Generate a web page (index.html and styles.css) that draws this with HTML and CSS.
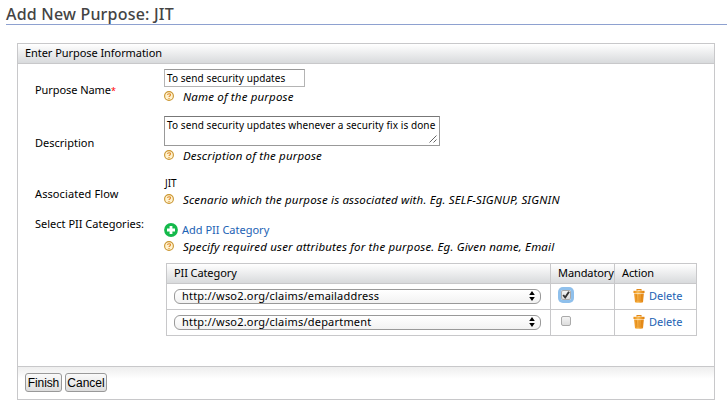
FILE: index.html
```
<!DOCTYPE html>
<html lang="en">
<head>
<meta charset="utf-8">
<title>Add New Purpose</title>
<link rel="stylesheet" href="styles.css">
</head>
<body>
<svg class="defs" width="0" height="0">
  <defs>
    <linearGradient id="gold" x1="0" y1="0" x2="1" y2="0"><stop offset="0" stop-color="#e8890c"/><stop offset=".4" stop-color="#fbbd55"/><stop offset="1" stop-color="#e07c06"/></linearGradient>
  </defs>
  <symbol id="help" viewBox="0 0 10 10">
    <circle cx="5" cy="5" r="4.4" fill="#fff3cf" stroke="#c9942f" stroke-width="1.1"/>
    <path d="M3.5 3.9C3.6 2.3 6.6 2.3 6.5 4C6.4 5 5 5 5 6.1M5 6.9V7.9" fill="none" stroke="#e08a2c" stroke-width="1.1"/>
  </symbol>
  <symbol id="trash" viewBox="0 0 12 14">
    <path d="M4 1.8V.6H8V1.8" fill="none" stroke="#e28a1a" stroke-width="1.1"/>
    <path d="M.5 1.8H11.5V4H.5Z" fill="url(#gold)"/>
    <path d="M1.2 4.4H10.8L10 13.2Q6 14.4 2 13.2Z" fill="url(#gold)"/>
    <path d="M3.6 5.4L4 12.4M6 5.4V12.6M8.4 5.4L8 12.4" stroke="#d87a0c" stroke-width=".7"/>
  </symbol>
</svg>
<h1 class="title">Add New Purpose: JIT</h1>
<section class="panel">
  <header class="panel-head">Enter Purpose Information</header>
  <div class="form">
    <div class="row row-name">
      <div class="label">Purpose Name<span class="req">*</span></div>
      <div class="field">
        <div class="input">To send security updates</div>
        <div class="hint"><svg class="help"><use href="#help"/></svg><em>Name of the purpose</em></div>
      </div>
    </div>
    <div class="row row-desc">
      <div class="label">Description</div>
      <div class="field">
        <div class="textarea">To send security updates whenever a security fix is done<svg class="grip" viewBox="0 0 8 8"><path d="M.5 7.5L7.5 .5M4.5 7.5L7.5 4.5" stroke="#555" stroke-width=".9"/></svg></div>
        <div class="hint"><svg class="help"><use href="#help"/></svg><em>Description of the purpose</em></div>
      </div>
    </div>
    <div class="row row-flow">
      <div class="label">Associated Flow</div>
      <div class="field">
        <div class="value">JIT</div>
        <div class="hint"><svg class="help"><use href="#help"/></svg><em>Scenario which the purpose is associated with. Eg. SELF-SIGNUP, SIGNIN</em></div>
      </div>
    </div>
    <div class="row row-pii">
      <div class="label">Select PII Categories:</div>
      <div class="field">
        <a class="add"><svg class="plus" viewBox="0 0 14 14"><circle cx="7" cy="7" r="6.9" fill="#14b94b"/><path d="M7 3V11M3 7H11" stroke="#fff" stroke-width="2.8"/></svg>Add PII Category</a>
        <div class="hint"><svg class="help"><use href="#help"/></svg><em>Specify required user attributes for the purpose. Eg. Given name, Email</em></div>
        <div class="table">
          <div class="cell th">PII Category</div>
          <div class="cell th">Mandatory</div>
          <div class="cell th">Action</div>
          <div class="cell"><div class="select"><span>http://wso2.org/claims/emailaddress</span><svg class="arrows" viewBox="0 0 6 10"><path d="M3 0L5.8 4H.2ZM3 10L5.8 6H.2Z"/></svg></div></div>
          <div class="cell"><span class="check focus"><svg viewBox="0 0 10 10"><path d="M2.2 5L4.2 7.5L8 1.8" fill="none" stroke="#333" stroke-width="1.9"/></svg></span></div>
          <div class="cell action"><svg class="trash"><use href="#trash"/></svg><a>Delete</a></div>
          <div class="cell"><div class="select"><span>http://wso2.org/claims/department</span><svg class="arrows" viewBox="0 0 6 10"><path d="M3 0L5.8 4H.2ZM3 10L5.8 6H.2Z"/></svg></div></div>
          <div class="cell"><span class="check"></span></div>
          <div class="cell action"><svg class="trash"><use href="#trash"/></svg><a>Delete</a></div>
        </div>
      </div>
    </div>
  </div>
  <footer class="panel-foot">
    <span class="btn finish">Finish</span>
    <span class="btn cancel">Cancel</span>
  </footer>
</section>
</body>
</html>
```

FILE: styles.css
```
* { box-sizing: border-box; }
body { margin: 0; width: 727px; height: 408px; overflow: hidden; background: #fff; color: #000; font: 11px/14px "Noto Sans", "Open Sans", sans-serif; white-space: nowrap; }
svg { display: block; flex: none; }
.defs { position: absolute; }
.title { margin: 0 0 18px 6px; height: 25px; padding: 4px 0 0; border-bottom: 1px solid #8ea1d0; color: #444; font-size: 16px; line-height: 20px; font-weight: 500; letter-spacing: .2px; }
.panel { width: 698px; height: 357px; margin-left: 17px; border: 1px solid #c8c8ca; display: flex; flex-direction: column; }
.panel-head { height: 20px; padding: 2px 0 0 7px; border-bottom: 1px solid #c8c8ca; background: linear-gradient(#fff, #d8dadc); letter-spacing: -.06px; }
.form { flex: 1; padding: 5px 0 0 17px; }
.row { display: flex; }
.row-name { height: 47px; }
.row-desc { height: 60px; }
.row-flow { height: 41px; }
.label { width: 129px; }
.row-name .label { padding-top: 14px; letter-spacing: -.07px; }
.row-desc .label { padding-top: 20px; }
.row-flow .label { padding-top: 11px; letter-spacing: .1px; }
.req { color: #f00; font-size: 9px; }
.input { width: 141px; height: 18px; padding: 1px 0 0 2px; border: 1px solid #b4b4b4; border-top-color: #999; font-size: 10px; letter-spacing: .08px; }
.textarea { position: relative; width: 276px; height: 30px; padding: 1px 0 0 2px; border: 1px solid #999; border-top-color: #777; font-size: 10px; letter-spacing: .09px; }
.grip { position: absolute; right: 2px; bottom: 2px; width: 8px; height: 8px; }
.hint { display: flex; margin-top: 3px; height: 14px; font-size: 11.5px; letter-spacing: .16px; }
.help { width: 10px; height: 10px; margin: 1px 9px 0 0; }
.value { height: 14px; padding-left: 1px; font-size: 10px; }
.add { display: flex; height: 14px; margin-top: 6px; color: #1c62b4; }
.plus { width: 14px; height: 14px; margin-right: 4px; }
.table { display: grid; grid-template-columns: 384px 64px 82px; grid-template-rows: 20px 26px 26px; width: 531px; margin: 9px 0 0 2px; border: solid #c8c8ca; border-width: 1px 0 0 1px; }
.cell { border: solid #c8c8ca; border-width: 0 1px 1px 0; padding: 5px 0 0 7px; }
.th { padding: 2px 0 0 7px; background: linear-gradient(#fff, #d8dadc); letter-spacing: -.1px; }
.select { display: flex; justify-content: space-between; width: 367px; height: 15px; padding: 0 5px 0 7px; border: 1px solid #999; border-radius: 6px; background: linear-gradient(#fff, #f2f2f2); line-height: 12px; letter-spacing: .2px; }
.arrows { width: 6px; height: 10px; margin-top: 1px; }
.check { display: block; width: 10px; height: 10px; margin: 1px 0 0 3px; border: 1px solid #aaa; border-radius: 2px; background: linear-gradient(#f4f4f4, #ddd); }
.check svg { width: 10px; height: 10px; margin: -1px; }
.focus { box-shadow: 0 0 0 3px #8fc0ec; }
.action { display: flex; padding-left: 18px; color: #1c62b4; }
.trash { width: 12px; height: 14px; margin-right: 4px; }
.panel-foot { display: flex; gap: 3px; height: 33px; padding: 6px 0 0 7px; border-top: 1px solid #c8c8ca; background: linear-gradient(#eee, #fff 12px); }
.btn { height: 19px; border: 1px solid #999; border-radius: 3px; background: linear-gradient(#fafafa, #ddd); font: 12px/18px "Liberation Sans", Arial, sans-serif; text-align: center; }
.finish { width: 37px; letter-spacing: -.1px; }
.cancel { width: 42px; }
```
